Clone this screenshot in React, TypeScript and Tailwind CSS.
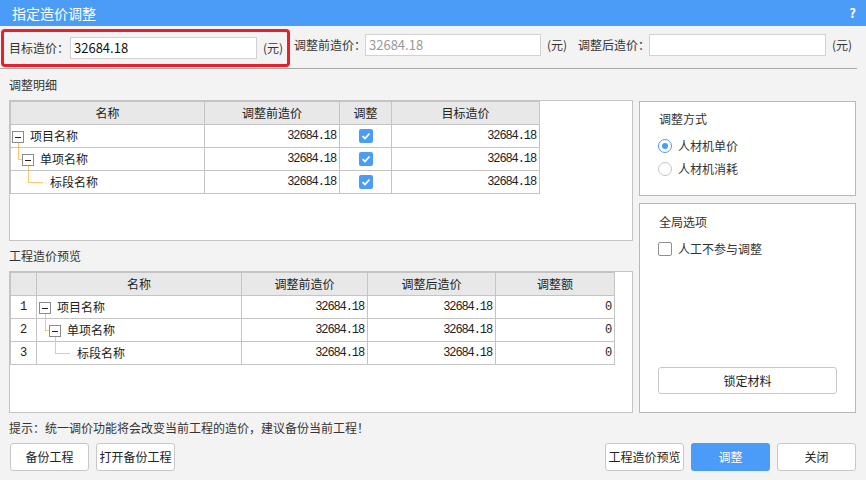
import React from 'react';

// Tree rows shared by both grids
const rows = [
  { level: 0, name: '项目名称' },
  { level: 1, name: '单项名称' },
  { level: 2, name: '标段名称' },
];

const MinusBox: React.FC<{ className: string }> = ({ className }) => (
  <span className={`absolute top-[6px] w-[12px] h-[12px] border border-[#8a8a8a] bg-white flex items-center justify-center ${className}`}>
    <span className="block w-[6px] h-[1px] bg-[#222]" />
  </span>
);

// name cell with the dotted-tree look (lines are orange in the original)
const TreeCell: React.FC<{ level: number; name: string }> = ({ level, name }) => {
  return (
    <div className="relative h-full flex items-center">
      {level === 0 && (
        <>
          <MinusBox className="left-[1px]" />
          <span className="absolute left-[7px] top-[18px] bottom-0 w-[1px] bg-[#ffc86e]" />
          <span className="pl-[19px]">{name}</span>
        </>
      )}
      {level === 1 && (
        <>
          <span className="absolute left-[7px] top-0 h-[11px] w-[1px] bg-[#ffc86e]" />
          <span className="absolute left-[7px] top-[11px] w-[5px] h-[1px] bg-[#ffc86e]" />
          <MinusBox className="left-[11px]" />
          <span className="absolute left-[17px] top-[18px] bottom-0 w-[1px] bg-[#ffc86e]" />
          <span className="pl-[29px]">{name}</span>
        </>
      )}
      {level === 2 && (
        <>
          <span className="absolute left-[17px] top-0 h-[11px] w-[1px] bg-[#ffc86e]" />
          <span className="absolute left-[17px] top-[11px] w-[15px] h-[1px] bg-[#ffc86e]" />
          <span className="pl-[39px]">{name}</span>
        </>
      )}
    </div>
  );
};

const BlueCheck = () => (
  <span className="w-[14px] h-[14px] rounded-[2px] bg-[#4a9cf8] flex items-center justify-center">
    <svg width="10" height="10" viewBox="0 0 10 10">
      <polyline points="1.5,5.2 4,7.5 8.5,2.5" fill="none" stroke="white" strokeWidth="1.8" />
    </svg>
  </span>
);

const Num: React.FC<{ v: string }> = ({ v }) => (
  <div className="h-full flex items-center justify-end pr-[3px] font-['Liberation_Mono',monospace] text-[12px] tracking-[-1.1px] text-[#222]">
    {v}
  </div>
);

const Btn: React.FC<{ children: React.ReactNode; primary?: boolean }> = ({ children, primary }) =>
  primary ? (
    <button className="w-[79px] h-[28px] rounded-[3px] bg-[#4a9cf8] text-white text-[12px]">{children}</button>
  ) : (
    <button className="w-[79px] h-[28px] rounded-[3px] bg-white border border-[#c8c8c8] text-[#222] text-[12px] whitespace-nowrap">{children}</button>
  );

const App: React.FC = () => {
  return (
    <div className="w-[866px] h-[480px] bg-[#f3f3f3] overflow-hidden font-['Noto_Sans_CJK_SC','Noto_Sans',sans-serif] text-[12px] text-[#333]">
      {/* Title bar */}
      <div className="h-[26px] bg-[#4a9cf6] flex items-center justify-between pl-[12px] pr-[10px] text-white">
        <span className="text-[14px]">指定造价调整</span>
        <span className="text-[13px] font-bold">?</span>
      </div>

      {/* Top price fields */}
      <div className="h-[43px] flex items-start pt-[3px] border-b border-[#aaaaaa] mr-[9px]">
        <div className="shrink-0 ml-[1px] w-[289px] h-[38px] border-[3px] border-[#e8202d] rounded-[4px] flex items-center pl-[5px]">
          <span className="w-[61px] shrink-0 whitespace-nowrap">目标造价：</span>
          <div className="shrink-0 w-[187px] h-[22px] border border-[#d2d2d2] bg-white flex items-center px-[3px] text-[13px] text-[#111]">32684.18</div>
          <span className="ml-[6px] whitespace-nowrap">(元)</span>
        </div>
        <div className="h-[32px] flex items-center whitespace-nowrap">
          <span className="ml-[4px] w-[71px] shrink-0">调整前造价：</span>
          <div className="shrink-0 w-[176px] h-[22px] border border-[#d2d2d2] bg-white flex items-center px-[3px] text-[13px] text-[#999]">32684.18</div>
          <span className="ml-[6px] w-[20px] shrink-0">(元)</span>
          <span className="ml-[11px] w-[71px] shrink-0">调整后造价：</span>
          <div className="shrink-0 w-[177px] h-[22px] border border-[#d2d2d2] bg-white" />
          <span className="ml-[6px] shrink-0">(元)</span>
        </div>
      </div>

      {/* Body */}
      <div className="flex pl-[9px] gap-[6px]">
        <div className="w-[624px] flex flex-col">
          <div className="h-[31px] flex items-center">调整明细</div>
          <div className="h-[141px] border border-[#c4c4c4] bg-white">
            <div className="grid grid-cols-[194px_135px_52px_148px] w-fit border-l border-t border-[#c4c4c4] text-[#222]">
              {['名称', '调整前造价', '调整', '目标造价'].map((h) => (
                <div key={h} className="h-[23px] bg-[#e8e8e8] border-r border-b border-[#c4c4c4] flex items-center justify-center">
                  {h}
                </div>
              ))}
              {rows.map((r) => (
                <React.Fragment key={r.name}>
                  <div className="h-[23px] border-r border-b border-[#c4c4c4]"><TreeCell level={r.level} name={r.name} /></div>
                  <div className="h-[23px] border-r border-b border-[#c4c4c4]"><Num v="32684.18" /></div>
                  <div className="h-[23px] border-r border-b border-[#c4c4c4] flex items-center justify-center"><BlueCheck /></div>
                  <div className="h-[23px] border-r border-b border-[#c4c4c4]"><Num v="32684.18" /></div>
                </React.Fragment>
              ))}
            </div>
          </div>

          <div className="h-[30px] flex items-center">工程造价预览</div>
          <div className="h-[142px] border border-[#c4c4c4] bg-white">
            <div className="grid grid-cols-[26px_205px_126px_128px_119px] w-fit border-l border-t border-[#c4c4c4] text-[#222]">
              {['', '名称', '调整前造价', '调整后造价', '调整额'].map((h, i) => (
                <div key={i} className="h-[23px] bg-[#e8e8e8] border-r border-b border-[#c4c4c4] flex items-center justify-center">
                  {h}
                </div>
              ))}
              {rows.map((r, i) => (
                <React.Fragment key={r.name}>
                  <div className="h-[23px] border-r border-b border-[#c4c4c4] flex items-center pl-[9px] font-['Liberation_Mono',monospace] text-[12px]">{i + 1}</div>
                  <div className="h-[23px] border-r border-b border-[#c4c4c4] pl-[1px]"><TreeCell level={r.level} name={r.name} /></div>
                  <div className="h-[23px] border-r border-b border-[#c4c4c4]"><Num v="32684.18" /></div>
                  <div className="h-[23px] border-r border-b border-[#c4c4c4]"><Num v="32684.18" /></div>
                  <div className="h-[23px] border-r border-b border-[#c4c4c4]"><Num v="0" /></div>
                </React.Fragment>
              ))}
            </div>
          </div>
        </div>

        {/* Right options */}
        <div className="w-[217px] flex flex-col">
          <div className="mt-[32px] h-[95px] border border-[#b8b8b8] bg-white pl-[18px] pt-[8px]">
            <div className="h-[18px] flex items-center ml-[1px]">调整方式</div>
            <div className="mt-[6px] h-[23px] flex items-center gap-[6px]">
              <span className="w-[14px] h-[14px] rounded-full border border-[#4a9cf8] flex items-center justify-center">
                <span className="w-[6px] h-[6px] rounded-full bg-[#4a9cf8]" />
              </span>
              人材机单价
            </div>
            <div className="h-[23px] flex items-center gap-[6px]">
              <span className="w-[14px] h-[14px] rounded-full border border-[#c4c4c4] bg-white" />
              人材机消耗
            </div>
          </div>
          <div className="mt-[7px] h-[210px] border border-[#b8b8b8] bg-white pl-[18px] pt-[9px] flex flex-col">
            <div className="h-[18px] flex items-center ml-[1px]">全局选项</div>
            <div className="mt-[6px] h-[23px] flex items-center gap-[6px]">
              <span className="w-[14px] h-[14px] rounded-[2px] border border-[#8f8f8f] bg-white" />
              人工不参与调整
            </div>
            <button className="mt-auto mb-[18px] w-[179px] h-[27px] rounded-[3px] border border-[#c8c8c8] bg-white text-[#222] text-[12px]">
              锁定材料
            </button>
          </div>
        </div>
      </div>

      <div className="h-[30px] flex items-center pl-[9px]">提示：统一调价功能将会改变当前工程的造价，建议备份当前工程！</div>

      <div className="flex justify-between px-[10px]">
        <div className="flex gap-[7px]">
          <Btn>备份工程</Btn>
          <Btn>打开备份工程</Btn>
        </div>
        <div className="flex gap-[7px]">
          <Btn>工程造价预览</Btn>
          <Btn primary>调整</Btn>
          <Btn>关闭</Btn>
        </div>
      </div>
    </div>
  );
};

export default App;
